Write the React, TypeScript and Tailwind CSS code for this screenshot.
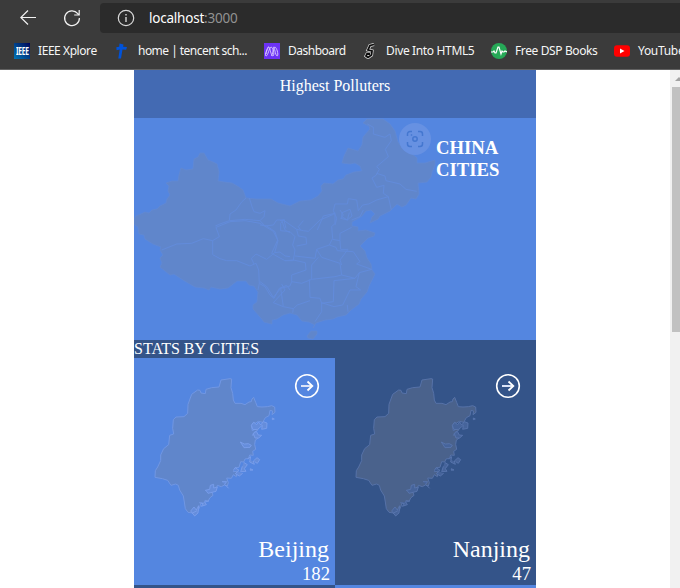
import React from "react";

const CHINA =
  "M134 219L136 216L141 214L145 212L149 213L152 210L157 209L160 206L166 203L167 199L170 195L168 191L169 186L166 183L172 181L178 181L179 175L181 168L186 170L193 169L194 159L198 157L200 153L204 153L208 160L213 162L217 164L219 172L218 181L224 182L232 183L239 187L243 190L246 198L256 199L271 199L278 203L290 206L300 201L311 200L318 196L322 191L321 186L324 183L333 184L338 180L343 179L346 175L354 172L362 171L360 166L355 163L350 164L342 163L344 156L348 148L358 151L362 145L363 137L370 129L369 126L363 123L367 119L375 119L383 119L390 124L395 131L398 142L403 149L411 153L417 158L417 163L425 163L435 160L435 165L432 172L431 177L427 182L418 183L419 194L416 199L411 198L406 205L402 207L397 204L390 211L380 216L378 219L370 223L372 217L375 214L371 210L366 211L362 216L357 219L352 222L352 226L358 227L358 231L366 230L375 233L374 236L368 238L360 246L365 251L367 258L371 264L372 270L375 274L372 280L369 286L367 292L361 299L359 304L351 310L346 315L337 317L333 319L325 320L316 323L313 328L315 325L309 322L302 321L297 315L290 313L283 315L277 319L272 320L272 324L264 322L261 318L253 309L253 305L257 302L258 292L254 286L249 285L246 281L237 281L228 288L220 289L211 287L209 290L204 288L195 287L183 280L174 274L170 275L160 267L162 263L160 258L163 255L160 250L161 247L153 244L145 239L144 235L139 234L138 227L134 224Z";

const NORTH_WEST = "M348 264L335 276L318 300L300 312L298 332L270 342L256 348M358 264L366 290L372 305L390 310L405 302L402 320L390 332L345 328L300 332M390 332L405 348L430 345L440 330L465 330";
const WEST = "M95 90L140 72L185 70L220 56L248 62L248 104L270 116L290 122L320 122L360 138L378 130L386 150L388 190L384 210M248 62L268 50L258 22L300 5L345 2L390 10L430 34L444 62L434 98L410 118L378 102L364 115L372 132M455 0L465 30L480 38M434 98L450 96L465 108L480 110M388 190L405 200L420 225L432 235L448 205L470 196L480 210";
const NORTH_EAST = "M262 42L280 52L280 72L315 82L330 72L334 92L316 118L325 140L290 170L298 178L288 196L276 204L290 232M290 190L315 198L318 212L360 222L378 238L410 244M290 232L312 226L310 250L325 260L334 300M325 260L290 270L266 282L248 285L235 302M235 302L230 270L205 266L202 282L165 282L160 302L170 325L165 345M210 298L186 308L185 320L202 330L216 318L210 298M165 310L130 318L112 360M0 332L12 330L18 355M70 332L55 350L62 360";
const SOUTH_EAST = "M0 45L20 48L45 65L53 90L35 130L75 152L100 152L105 120L98 105L105 80L90 65L62 62L62 40L70 30L110 58L115 78L138 82L140 102L110 108M110 58L130 62L145 64L180 30L218 14L225 8L225 40L215 50L218 85L208 105L170 118L165 145L105 138M170 118L185 142L240 160L245 195L225 200L155 208L155 165L175 142M218 88L240 92L242 118L264 118L240 150L245 165M240 92L240 70L275 52M208 105L228 112L232 122L280 125L300 155L290 162L335 178M245 195L285 205L298 188L335 178M298 188L288 230L302 240M285 205L222 212L220 275L185 280L180 265L150 262L148 208M302 240L270 240L248 285L222 290L185 278L185 305L165 335M262 285L264 305M75 152L100 150L136 158L138 180L95 195L95 215L125 220L155 208M95 215L90 228L62 235L70 290L100 296L98 308M70 290L40 278L75 240L65 222M100 296L112 285L150 272M0 215L20 230L40 262L62 235M240 0L250 15L242 25L262 30L268 8M310 0L300 20L275 30";

const FUJIAN =
  "M243 45L270 41L275 42L273 68L278 85L280 105L285 115L303 115L315 119L327 111L334 110L336 102L341 97L347 112L352 125L366 126L382 125L395 122L404 126L405 142L396 149L398 138L390 136L387 152L376 158L368 172L355 169L347 174L339 173L334 183L337 197L350 190L356 181L353 196L342 202L337 211L350 206L355 219L346 225L344 238L347 253L338 259L340 271L329 270L326 280L315 282L311 291L302 290L297 307L285 308L280 320L292 319L289 335L280 329L274 340L260 339L265 353L262 363L253 360L244 365L232 361L228 376L215 379L219 391L209 399L205 408L195 406L192 418L184 413L179 426L174 438L164 451L158 444L144 442L136 431L133 411L130 393L119 375L115 361L107 357L93 361L83 346L67 341L45 337L46 317L53 306L62 287L62 270L71 251L86 239L89 211L101 207L98 190L100 164L108 156L132 155L143 145L144 118L155 88L173 75L180 76L183 84L196 86L198 73L215 68L237 66Z";
const COAST =
  "M334 181L341 172L350 179L356 171L362 180L370 170L381 174L380 190L365 193L367 181L353 193L339 194ZM340 206L349 199L355 210L365 211L356 219L345 219ZM323 282L332 275L329 291L343 298L340 288L351 278L359 284L352 295L344 290M311 292L322 299L313 311L318 319L302 320L307 304M331 311L339 315L331 316ZM397 159L403 162L397 164ZM301 231L313 237L325 236L334 241L330 247L312 248ZM281 314L286 308L297 316L286 326L298 333L308 325M246 350L260 350L254 358L266 370M196 376L209 373L211 361L221 358L221 369L232 366L228 379L204 385L200 379ZM178 413L190 416L184 424L199 419L194 411L207 408M152 438L162 426L169 435L176 422L174 444L164 453ZM156 445L171 437";

function Bookmark({ icon, label, className, text }: { icon: React.ReactNode; label: string; className: string; text: string }) {
  return (
    <div className={`flex shrink-0 items-center gap-2 ${className}`}>
      <span className="flex h-4 w-4 shrink-0 items-center justify-center">{icon}</span>
      <span className={`whitespace-nowrap text-xs text-[#f6f6f6] ${text}`}>{label}</span>
    </div>
  );
}

function Browser() {
  return (
    <header className="h-[70px] overflow-hidden border-b border-[#626262] bg-[#3b3b3b] font-['Noto_Sans',sans-serif]">
      <div className="flex h-9 items-center">
        <svg className="ml-5 h-4 w-4 shrink-0" viewBox="0 0 16 16" fill="none" stroke="#f1f1f1" strokeWidth="1.2">
          <path d="M16 7.5H.8M8 .5L.8 7.5L8 14.5" />
        </svg>
        <svg className="ml-7 h-4 w-4 shrink-0 overflow-visible" viewBox="0 0 16 16" fill="none" stroke="#f1f1f1" strokeWidth="1.2">
          <path d="M15.4 8A7.4 7.4 0 1 1 13.8 3.6L15.2 5M15.2 0V5H10.2" />
        </svg>
        <div className="ml-5 flex h-[30px] flex-1 items-center rounded-l bg-[#2b2b2b] pl-[18px]">
          <svg className="h-4 w-4 shrink-0 overflow-visible" viewBox="0 0 16 16" fill="none" stroke="#d8d8d8" strokeWidth="1.2">
            <circle cx="8" cy="8" r="7.7" />
            <path d="M8 7v5M8 4v1.5" strokeWidth="1.4" />
          </svg>
          <span className="ml-[15px] text-[13.5px] tracking-[-0.22px] text-white">
            localhost<span className="text-[#929292]">:3000</span>
          </span>
        </div>
      </div>
      <div className="flex h-[30px] items-center pl-3.5">
        <Bookmark className="w-[100px]" text="tracking-[-0.43px]" label="IEEE Xplore" icon={
          <span className="flex h-4 w-4 items-center justify-center bg-gradient-to-tr from-[#0877b8] to-[#00005a]">
            <span className="scale-x-75 scale-y-125 text-[9px] font-bold tracking-[-0.5px] text-white">IEEE</span>
          </span>} />
        <Bookmark className="w-[150px]" text="tracking-[-0.53px]" label="home | tencent sch..." icon={
          <svg viewBox="0 0 16 16" className="h-4 w-4"><path d="M5.5 .5l4 1-.4 2.2 3.9.3-.8 2.7-3.7-.2L7 15.5H4.3L5.7 6.6 2.6 7.2 2.3 4.2l2.9-.5z" fill="#0052d9" /></svg>} />
        <Bookmark className="w-[98px]" text="tracking-[-0.5px]" label="Dashboard" icon={
          <svg viewBox="0 0 16 16" className="h-4 w-4"><path fill="#6c32f5" d="M0 0h16v16H0z" /><path d="M2 11C3 6 4 3 5 4C6 5 7 13 9 13C11 12 9 4 7 4C5 5 4 13 2 13C0 12 4 4 5 4M7 13C9 12 9 4 11 4C13 5 15 13 13 13C11 12 11 4 9 4" fill="none" stroke="#d5c3ff" /></svg>} />
        <Bookmark className="w-[129px]" text="tracking-[-0.35px]" label="Dive Into HTML5" icon={
          <svg viewBox="0 0 16 16" className="h-4 w-4"><g fill="none"><path d="M12 1.5L8 2.5L6 7L10 8L9.5 12L6 14.5L4 13L5 11L8 11" stroke="#dcdcdc" strokeWidth="3.2" /><path d="M12 1.5L8 2.5L6 7L10 8L9.5 12L6 14.5L4 13L5 11L8 11" stroke="#0c0c0c" strokeWidth="1.8" /></g></svg>} />
        <Bookmark className="w-[123px]" text="tracking-[-0.38px]" label="Free DSP Books" icon={
          <svg viewBox="0 0 16 16" className="h-4 w-4"><circle cx="8" cy="8" r="8" fill="#26a957" /><path d="M0 9h2l1-1 1 2h1L7 4h1l2 7 1-3 1 1h1l1-1 2 1" fill="none" stroke="#fff" strokeWidth="1.2" /></svg>} />
        <Bookmark className="" text="tracking-[-0.3px]" label="YouTube" icon={
          <svg viewBox="0 0 16 16" className="h-4 w-4"><rect y="2.2" width="16" height="11.6" rx="3" fill="#f00" /><path d="M6 5.5v5L10.5 8z" fill="#fff" /></svg>} />
      </div>
    </header>
  );
}

function CityCard({ city, value, light }: { city: string; value: number; light: boolean }) {
  return (
    <article className={`flex h-[227px] w-[201px] flex-col items-end ${light ? "bg-[#5486e0]" : "bg-[#345489]"}`}>
      <div className="flex h-[178px] w-full items-start">
        <svg className="ml-[19px] mt-[18px] h-[144px] w-[125px]" viewBox="39 33 375 432">
          <path d={FUJIAN} fill={light ? "#6086cb" : "#4a628c"} stroke={light ? "#7197e3" : "#5672a8"} strokeWidth="3" />
          <path d={COAST} fill={light ? "#658ddb" : "#46649b"} stroke={light ? "#7ca0ed" : "#5a77b0"} strokeWidth="2.5" />
        </svg>
        <svg className="ml-4 mt-[15px] h-[26px] w-[26px]" viewBox="0 0 26 26" fill="none" stroke="#fff" strokeWidth="1.6">
          <circle cx="13" cy="13" r="11.3" />
          <path d="M7 13h11" stroke="#dce4f7" strokeWidth="2" />
          <path d="M13.5 8.5L18.3 13l-4.8 4.5" strokeWidth="1.8" />
        </svg>
      </div>
      <h2 className="pr-1.5 text-2xl leading-[27px]">{city}</h2>
      <p className="pr-[5px] text-[18.72px] leading-[21px]">{value}</p>
    </article>
  );
}

export default function App() {
  return (
    <div className="h-[588px] w-[680px] overflow-hidden bg-white">
      <Browser />
      <div className="flex h-[518px] justify-between">
        <main className="ml-[134px] w-[402px] overflow-hidden bg-[#345489] font-['Liberation_Serif',serif] text-white">
          <div className="h-12 bg-[#436ab3] pt-[7px] text-center text-base leading-[18px]">Highest Polluters</div>
          <section className="relative h-[222px] bg-[#5486e0]">
            <svg className="h-[222px] w-[402px]" viewBox="134 118 402 222">
              <g fill="#6086cb" stroke="#6389d3" strokeWidth=".7">
                <path d={CHINA} />
                <path d="M307 336L311 331L317 331L317 334L313 339L308 338Z" />
              </g>
              <g fill="none" stroke="#628cdb" strokeWidth="3" strokeLinejoin="round">
                <path transform="translate(130 110) scale(.33333)" d={NORTH_WEST} />
                <path transform="translate(130 220) scale(.33333)" d={WEST} />
                <path transform="translate(280 110) scale(.33333)" d={NORTH_EAST} />
                <path transform="translate(260 210) scale(.33333)" d={SOUTH_EAST} />
              </g>
            </svg>
            <div className="absolute left-[265px] top-[5px] flex h-8 w-8 items-center justify-center rounded-full bg-[#6791e2]">
              <svg className="h-[18px] w-[18px]" viewBox="0 0 18 18" fill="none" stroke="#4477d0" strokeWidth="1.5">
                <path d="M1.5 6V4A2.5 2.5 0 0 1 4 1.5H6M12 1.5H14A2.5 2.5 0 0 1 16.5 4V6M16.5 12V14A2.5 2.5 0 0 1 14 16.5H12M6 16.5H4A2.5 2.5 0 0 1 1.5 14V12" />
                <circle cx="9" cy="9" r="2.2" />
                <path d="M4.8 5h1.4" />
              </svg>
            </div>
            <h1 className="absolute left-[302px] top-[19px] w-20 text-[18.72px] font-bold leading-[22px]">CHINA CITIES</h1>
          </section>
          <div className="h-[18px] text-base leading-[18px]">STATS BY CITIES</div>
          <div className="grid grid-cols-2">
            <CityCard city="Beijing" value={182} light />
            <CityCard city="Nanjing" value={47} light={false} />
            <div className="h-[3px] bg-[#345489]" />
            <div className="h-[3px] bg-[#5486e0]" />
          </div>
        </main>
        <aside className="flex w-2.5 flex-col overflow-hidden bg-[#f1f1f1] pl-0.5">
          <svg className="h-[17px] w-3 shrink-0" viewBox="0 0 12 17"><path d="M3 11L7 7l4 4z" fill="#a3a3a3" /></svg>
          <div className="h-[245px] w-2 bg-[#c1c1c1]" />
        </aside>
      </div>
    </div>
  );
}
